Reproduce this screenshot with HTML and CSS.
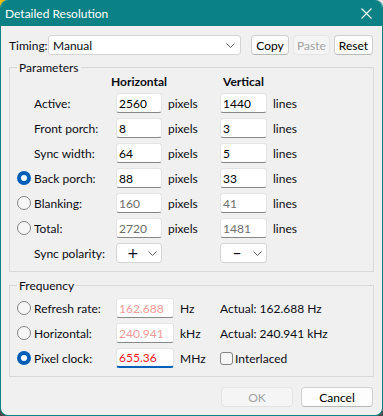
FILE: index.html
```html
<!DOCTYPE html>
<html lang="en">
<head>
    <meta charset="utf-8">
    <title>Detailed Resolution</title>
    <link rel="stylesheet" href="styles.css">
</head>
<body>
<div class="window">
    <div class="titlebar">
        <span class="title">Detailed Resolution</span>
        <span class="close">
            <svg width="11" height="11" viewBox="0 0 11 11"><path d="M0.5 0.5L10.5 10.5M10.5 0.5L0.5 10.5" stroke="#fff" stroke-width="1.1" fill="none"/></svg>
        </span>
    </div>

    <div class="content">
        <div class="timing">
            <span class="timing-label">Timing:</span>
            <div class="combo combo-wide">
                <span>Manual</span>
                <svg class="chev" width="9" height="5" viewBox="0 0 9 5"><path d="M0.5 0.5L4.5 4.5L8.5 0.5" stroke="#606060" fill="none"/></svg>
            </div>
            <button class="btn btn-copy">Copy</button>
            <button class="btn btn-paste" disabled>Paste</button>
            <button class="btn btn-reset">Reset</button>
        </div>

        <fieldset class="group">
            <legend>Parameters</legend>
            <div class="params">
                <span></span><span></span><b class="head">Horizontal</b><span></span><b class="head">Vertical</b><span></span>

                <span></span><span class="lbl">Active:</span><input class="field" value="2560"><span class="unit">pixels</span><input class="field" value="1440"><span class="unit">lines</span>

                <span></span><span class="lbl">Front porch:</span><input class="field" value="8"><span class="unit">pixels</span><input class="field" value="3"><span class="unit">lines</span>

                <span></span><span class="lbl">Sync width:</span><input class="field" value="64"><span class="unit">pixels</span><input class="field" value="5"><span class="unit">lines</span>

                <span class="radio on"></span><span class="lbl">Back porch:</span><input class="field" value="88"><span class="unit">pixels</span><input class="field" value="33"><span class="unit">lines</span>

                <span class="radio"></span><span class="lbl">Blanking:</span><input class="field dim" value="160"><span class="unit">pixels</span><input class="field dim" value="41"><span class="unit">lines</span>

                <span class="radio"></span><span class="lbl">Total:</span><input class="field dim" value="2720"><span class="unit">pixels</span><input class="field dim" value="1481"><span class="unit">lines</span>

                <span></span><span class="lbl">Sync polarity:</span>
                <div class="combo combo-pol">
                    <span class="sign">+</span>
                    <svg class="chev" width="9" height="5" viewBox="0 0 9 5"><path d="M0.5 0.5L4.5 4.5L8.5 0.5" stroke="#606060" fill="none"/></svg>
                </div>
                <span></span>
                <div class="combo combo-pol combo-neg">
                    <span class="sign">&ndash;</span>
                    <svg class="chev" width="9" height="5" viewBox="0 0 9 5"><path d="M0.5 0.5L4.5 4.5L8.5 0.5" stroke="#606060" fill="none"/></svg>
                </div>
                <span></span>
            </div>
        </fieldset>

        <fieldset class="group group-freq">
            <legend>Frequency</legend>
            <div class="freq">
                <span class="radio"></span><span class="lbl">Refresh rate:</span><input class="field pink" value="162.688"><span class="unit">Hz</span><span class="actual">Actual: 162.688 Hz</span>

                <span class="radio"></span><span class="lbl">Horizontal:</span><input class="field pink" value="240.941"><span class="unit">kHz</span><span class="actual">Actual: 240.941 kHz</span>

                <span class="radio on"></span><span class="lbl">Pixel clock:</span><input class="field red focus" value="655.36"><span class="unit">MHz</span>
                <label class="check"><span class="box"></span>Interlaced</label>
            </div>
        </fieldset>

        <div class="actions">
            <button class="btn btn-wide" disabled>OK</button>
            <button class="btn btn-wide">Cancel</button>
        </div>
    </div>
</div>
</body>
</html>
```

FILE: styles.css
```css
* {
    box-sizing: border-box;
    margin: 0;
    padding: 0;
}

html, body {
    width: 383px;
    height: 416px;
    overflow: hidden;
}

body {
    font-family: Lato, "Liberation Sans", sans-serif;
    font-size: 12px;
    color: #0c0c14;
    background:
        linear-gradient(to bottom, transparent 50%, #4a4a4a 50%),
        linear-gradient(to right, #f0c000 50%, #e4e4e4 50%);
}

.window {
    height: 416px;
    border: 1px solid #0a8184;
    border-top: 0;
    border-radius: 8px;
    overflow: hidden;
    background: #f0f0f0;
}

.titlebar {
    height: 26px;
    background: #0a8184;
    color: #fff;
    display: flex;
    align-items: center;
    padding-left: 4px;
    font-size: 12px;
}

.close {
    margin-left: auto;
    margin-right: 10px;
    display: flex;
}

.content {
    padding: 0 8px;
}

.timing {
    margin-top: 9px;
    height: 20px;
    display: flex;
    align-items: center;
}

.timing-label {
    width: 39px;
}

.combo {
    height: 20px;
    background: #fff;
    border: 1px solid #d4d4d4;
    border-radius: 3px;
    display: flex;
    align-items: center;
    position: relative;
}

.combo .chev {
    position: absolute;
    right: 4px;
    top: 7px;
}

.combo-wide {
    width: 193px;
    padding-left: 4px;
}

.combo-wide .chev {
    right: 5px;
}

.combo-pol {
    padding-left: 10px;
}

.combo-neg {
    padding-left: 12px;
}

.sign {
    font-family: "DejaVu Sans", sans-serif;
    font-size: 14px;
    line-height: 18px;
}

.combo-neg .sign {
    font-size: 16px;
}

.btn {
    height: 20px;
    font: inherit;
    color: #000;
    background: #fdfdfd;
    border: 1px solid #d0d0d0;
    border-bottom-color: #b8b8b8;
    border-radius: 4px;
}

.btn:disabled {
    color: #a2a2a2;
    background: #f5f5f5;
    border-color: #e3e3e3;
}

.btn-copy {
    width: 38px;
    margin-left: 10px;
}

.btn-paste {
    width: 37px;
    margin-left: 4px;
}

.btn-reset {
    width: 39px;
    margin-left: 4px;
}

.group {
    margin-top: 5px;
    border: 1px solid #d8d8d8;
    padding: 0 7px 8px 7px;
}

.group legend {
    line-height: 15px;
    padding: 0 2px;
}

.group-freq {
    margin-top: 6px;
    padding-top: 5px;
}

.params {
    display: grid;
    grid-template-columns: 17px 82px 46px 58px 47px 1fr;
    grid-template-rows: 13px repeat(7, 20px);
    row-gap: 5px;
    align-items: center;
}

.freq {
    display: grid;
    grid-template-columns: 17px 82px 58px 46px 1fr;
    grid-template-rows: repeat(3, 20px);
    row-gap: 5px;
    align-items: center;
}

.head {
    justify-self: center;
    white-space: nowrap;
    line-height: 13px;
}

.unit {
    padding-left: 6px;
}

.field {
    height: 20px;
    width: 100%;
    font: inherit;
    color: #000;
    background: #fff;
    border: 1px solid #e4e4e4;
    border-bottom-color: #878787;
    border-radius: 3px;
    padding-left: 2px;
    outline: none;
}

.dim {
    color: #6d6d6d;
}

.pink {
    color: #f59a9a;
}

.red {
    color: #f0141e;
}

.focus {
    border-bottom: 2px solid #005fb8;
}

.radio {
    width: 14px;
    height: 14px;
    border-radius: 50%;
    border: 1px solid #858585;
    background: #f6f6f6;
}

.radio.on {
    border: 4px solid #005fb8;
    background: #fff;
}

.check {
    display: flex;
    align-items: center;
    gap: 2px;
}

.box {
    width: 13px;
    height: 13px;
    border: 1px solid #858585;
    border-radius: 3px;
    background: #f6f6f6;
}

.actions {
    margin-top: 10px;
    display: flex;
    justify-content: flex-end;
    gap: 8px;
    padding-right: 1px;
}

.btn-wide {
    width: 72px;
}
```
